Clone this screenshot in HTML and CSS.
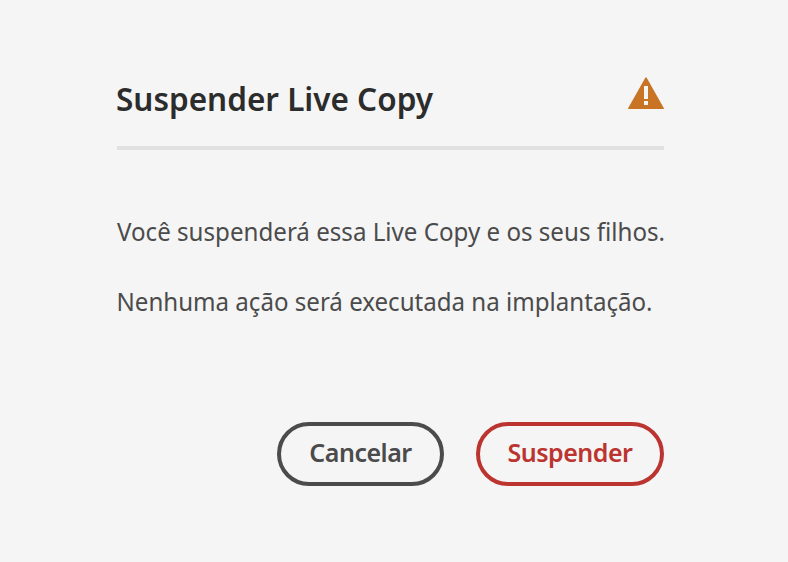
FILE: index.html
```html
<!DOCTYPE html>
<html lang="pt-BR">
<head>
<meta charset="utf-8">
<title>Suspender Live Copy</title>
<link rel="stylesheet" href="styles.css">
</head>
<body>
<main class="dialog">
  <header class="dialog-header">
    <h1 class="title"><svg class="fit" width="317" height="48"><text x="-1" y="35" textLength="317" lengthAdjust="spacingAndGlyphs">Suspender Live Copy</text></svg></h1>
    <svg class="alert" viewBox="0 0 36 32" width="36" height="32" aria-hidden="true">
      <path fill="#c87424" d="M17.3 .7a.8 .8 0 0 1 1.4 0L35.9 31.2a.5 .5 0 0 1-.4 .8H.5a.5 .5 0 0 1-.4-.8z"/>
      <path fill="#f5f5f5" d="M16 9h4v13h-4zM16 24h4v4h-4z"/>
    </svg>
  </header>
  <div class="content">
    <p><svg class="fit" width="548" height="40"><text x="0" y="30" textLength="548" lengthAdjust="spacingAndGlyphs">Você suspenderá essa Live Copy e os seus filhos.</text></svg></p>
    <p><svg class="fit" width="548" height="40"><text x="-.5" y="30" textLength="536" lengthAdjust="spacingAndGlyphs">Nenhuma ação será executada na implantação.</text></svg></p>
  </div>
  <footer class="actions">
    <button class="button cancel">Cancelar</button>
    <button class="button suspend">Suspender</button>
  </footer>
</main>
</body>
</html>
```

FILE: styles.css
```css
* { box-sizing: border-box; }
body { margin: 0; background: #f5f5f5; font-family: "Noto Sans", "Open Sans", sans-serif; }
.dialog { width: 547px; margin-left: 117px; padding-top: 76px; }
.dialog-header { display: flex; justify-content: space-between; height: 74px; border-bottom: 4px solid #e1e1e1; }
.title { margin: 0; font-size: 33px; font-weight: 600; }
.fit { display: block; overflow: visible; }
.title text { fill: #2c2c2c; }
.alert { margin-top: 1px; }
.content { padding-top: 61px; height: 272px; font-size: 26px; }
.content p { margin: 0 0 30px; }
.content text { fill: #4b4b4b; }
.actions { display: flex; justify-content: flex-end; gap: 32px; }
.button { height: 64px; padding: 0 0 4px; border: 4px solid; border-radius: 32px; background: transparent; font: 600 25px "Noto Sans", sans-serif; letter-spacing: -.5px; }
.cancel { width: 167px; color: #4b4b4b; }
.suspend { width: 188px; color: #bb3430; }
```
